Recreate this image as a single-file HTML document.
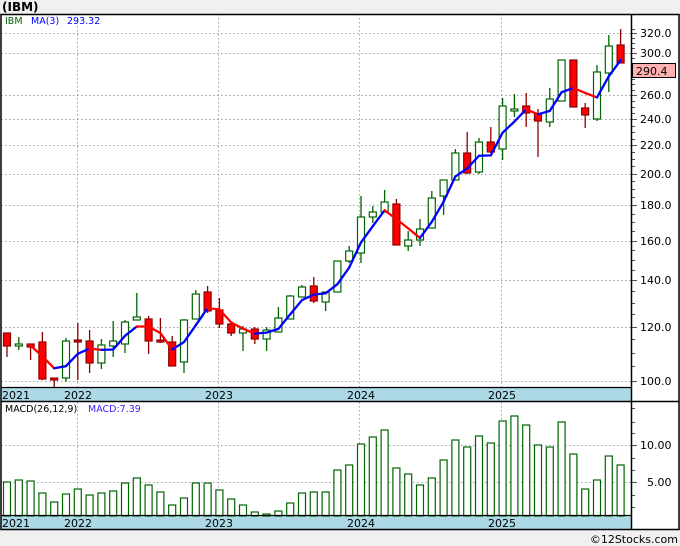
<!DOCTYPE html>
<html><head><meta charset="utf-8"><style>
body{margin:0;background:#f0f0f0;width:680px;height:546px;overflow:hidden;font-family:"DejaVu Sans","Liberation Sans",sans-serif}
svg{position:absolute;left:0;top:0}
</style></head><body>
<svg id="s" width="680" height="546" xmlns="http://www.w3.org/2000/svg"></svg>
<script>
const C=[
[333,346,333,357],[346,344,337,350],[344,347,344,360],[342,379,332,380],[378,380,378,387],
[378,341,338,382],[340,342,323,380],[341,363,330,373],[363,345,339,369],[346,341,321,357],
[344,322,320,353],[320,317,293,320],[319,341,316,354],[340,342,318,343],[342,366,336,366],
[362,320,319,373],[319,294,290,319],[292,311,286,313],[310,324,298,328],[324,333,324,336],
[333,329,326,351],[329,339,327,344],[339,330,327,351],[332,318,307,332],[319,296,295,319],
[297,287,285,297],[286,301,277,303],[302,292,292,311],[292,261,261,292],[261,251,246,263],
[253,217,196,263],[217,212,206,223],[212,202,190,212],[204,245,199,245],[246,240,231,251],
[240,229,219,246],[228,198,191,228],[196,180,180,215],[180,153,149,180],[153,173,132,174],
[172,142,138,174],[142,152,127,153],[149,106,98,160],[111,109,94,117],[106,113,93,127],
[114,121,109,157],[122,99,88,127],[101,60,60,101],[60,107,60,107],[108,115,103,128],
[119,72,65,121],[73,46,35,92],[45,63,29,63]];
const M=[482,480,481,493,502,494,489,495,493,491,483,478,485,492,505,498,483,483,490,499,505,512,514,511,503,493,492,492,470,465,444,437,430,468,474,485,478,460,440,447,436,443,421,416,425,445,447,422,454,489,480,456,465];
const A=1758,B=299,py=p=>A-B*Math.log(p),pp=y=>Math.exp((A-y)/B);
const X=i=>7+i*11.8;
let h='';
// backgrounds
h+='<rect x="0" y="0" width="680" height="546" fill="#f0f0f0"/>';
h+='<rect x="1" y="14" width="678" height="516" fill="#fff"/>';
h+='<rect x="1" y="388" width="631" height="13" fill="#add8e6"/>';
h+='<rect x="1" y="516" width="631" height="13" fill="#add8e6"/>';
// grid
const yrs=[77,218,359,501];
const g='stroke="#a0a0a0" stroke-dasharray="1.5,2.5" stroke-width="1"';
yrs.forEach(x=>{h+=`<line x1="${x}.5" y1="14" x2="${x}.5" y2="388" ${g}/><line x1="${x}.5" y1="402" x2="${x}.5" y2="516" ${g}/>`});
const labs=[320,300,260,240,220,200,180,160,140,120,100];
labs.forEach(p=>{const y=Math.round(py(p))+.5;h+=`<line x1="1" y1="${y}" x2="631" y2="${y}" ${g}/>`});
[445,482].forEach(y=>h+=`<line x1="1" y1="${y}.5" x2="631" y2="${y}.5" ${g}/>`);
// minor ticks price
for(let p=95;p<=325;p+=5){const y=Math.round(py(p))+.5;if(y<16||y>386)continue;h+=`<line x1="632" y1="${y}" x2="${labs.includes(p)?637:635}" y2="${y}" stroke="#555"/>`}
labs.forEach(p=>{const y=Math.round(py(p));h+=`<text x="640" y="${y+4}" font-size="11" fill="#000">${p.toFixed(1)}</text>`});
[408,422,433,458,470,495,507].forEach(y=>h+=`<line x1="632" y1="${y}.5" x2="635" y2="${y}.5" stroke="#555"/>`);
[445,482].forEach(y=>h+=`<line x1="632" y1="${y}.5" x2="637" y2="${y}.5" stroke="#555"/>`);
h+='<text x="640" y="449" font-size="11">10.00</text><text x="647" y="486" font-size="11">5.00</text>';
// candles
C.forEach((c,i)=>{const x=X(i),[o,cl,hi,lo]=c,up=cl<o;const t=Math.min(o,cl),b=Math.max(o,cl);
const col=up?'#006400':'#8b0000';
h+=`<line x1="${x}" y1="${hi}" x2="${x}" y2="${lo}" stroke="${col}" stroke-width="1.3"/>`;
h+=`<rect x="${x-3.5}" y="${t}" width="7" height="${Math.max(b-t,2)}" fill="${up?'#fff':'#ff0000'}" stroke="${col}" stroke-width="1.2"/>`;});
// MA
const P=C.map(c=>pp(c[1]));let ma=[];
for(let i=2;i<P.length;i++)ma.push([X(i),py((P[i]+P[i-1]+P[i-2])/3)]);
for(let i=1;i<ma.length;i++){const up=ma[i][1]<ma[i-1][1];h+=`<line x1="${ma[i-1][0]}" y1="${ma[i-1][1]}" x2="${ma[i][0]}" y2="${ma[i][1]}" stroke="${up?'#0000ff':'#ff0000'}" stroke-width="2.3" stroke-linecap="round"/>`}
// MACD bars
M.forEach((t,i)=>{const x=X(i);h+=`<rect x="${x-3.5}" y="${t}" width="7" height="${516-t}" fill="#fff" stroke="#006400" stroke-width="1.2"/>`});
// frames
h+='<rect x="1" y="14.5" width="678" height="515" fill="none" stroke="#000" stroke-width="1.5"/>';
h+='<line x1="631.5" y1="14" x2="631.5" y2="530" stroke="#000" stroke-width="1.5"/>';
h+='<line x1="1" y1="387.5" x2="632" y2="387.5" stroke="#000" stroke-width="1.2"/>';
h+='<line x1="1" y1="401.5" x2="679" y2="401.5" stroke="#000" stroke-width="1.5"/>';
h+='<line x1="1" y1="515.5" x2="632" y2="515.5" stroke="#000" stroke-width="1.2"/>';
// price box
h+='<rect x="632.5" y="63.5" width="43" height="14" fill="#ffb0b0" stroke="#000"/><text x="636" y="75" font-size="11">290.4</text>';
// years
[[2,'2021'],[64,'2022'],[205,'2023'],[347,'2024'],[488,'2025']].forEach(([x,t])=>{h+=`<text x="${x}" y="399" font-size="11">${t}</text><text x="${x}" y="527" font-size="11">${t}</text>`});
// legends
h+='<text x="2" y="11" font-size="12" font-weight="bold">(IBM)</text>';
h+='<text x="5" y="24" font-size="9.5" fill="#006400">IBM</text><text x="31" y="24" font-size="9.5" fill="#0000ff">MA(3)</text><text x="67" y="24" font-size="9.5" fill="#0000ff">293.32</text>';
h+='<text x="5" y="412" font-size="9.5" fill="#000">MACD(26,12,9)</text><text x="88" y="412" font-size="9.5" fill="#4020ff">MACD:7.39</text>';
h+='<text x="678" y="543" font-size="11" text-anchor="end">©12Stocks.com</text>';
document.getElementById('s').innerHTML=h;
</script>
</body></html>
